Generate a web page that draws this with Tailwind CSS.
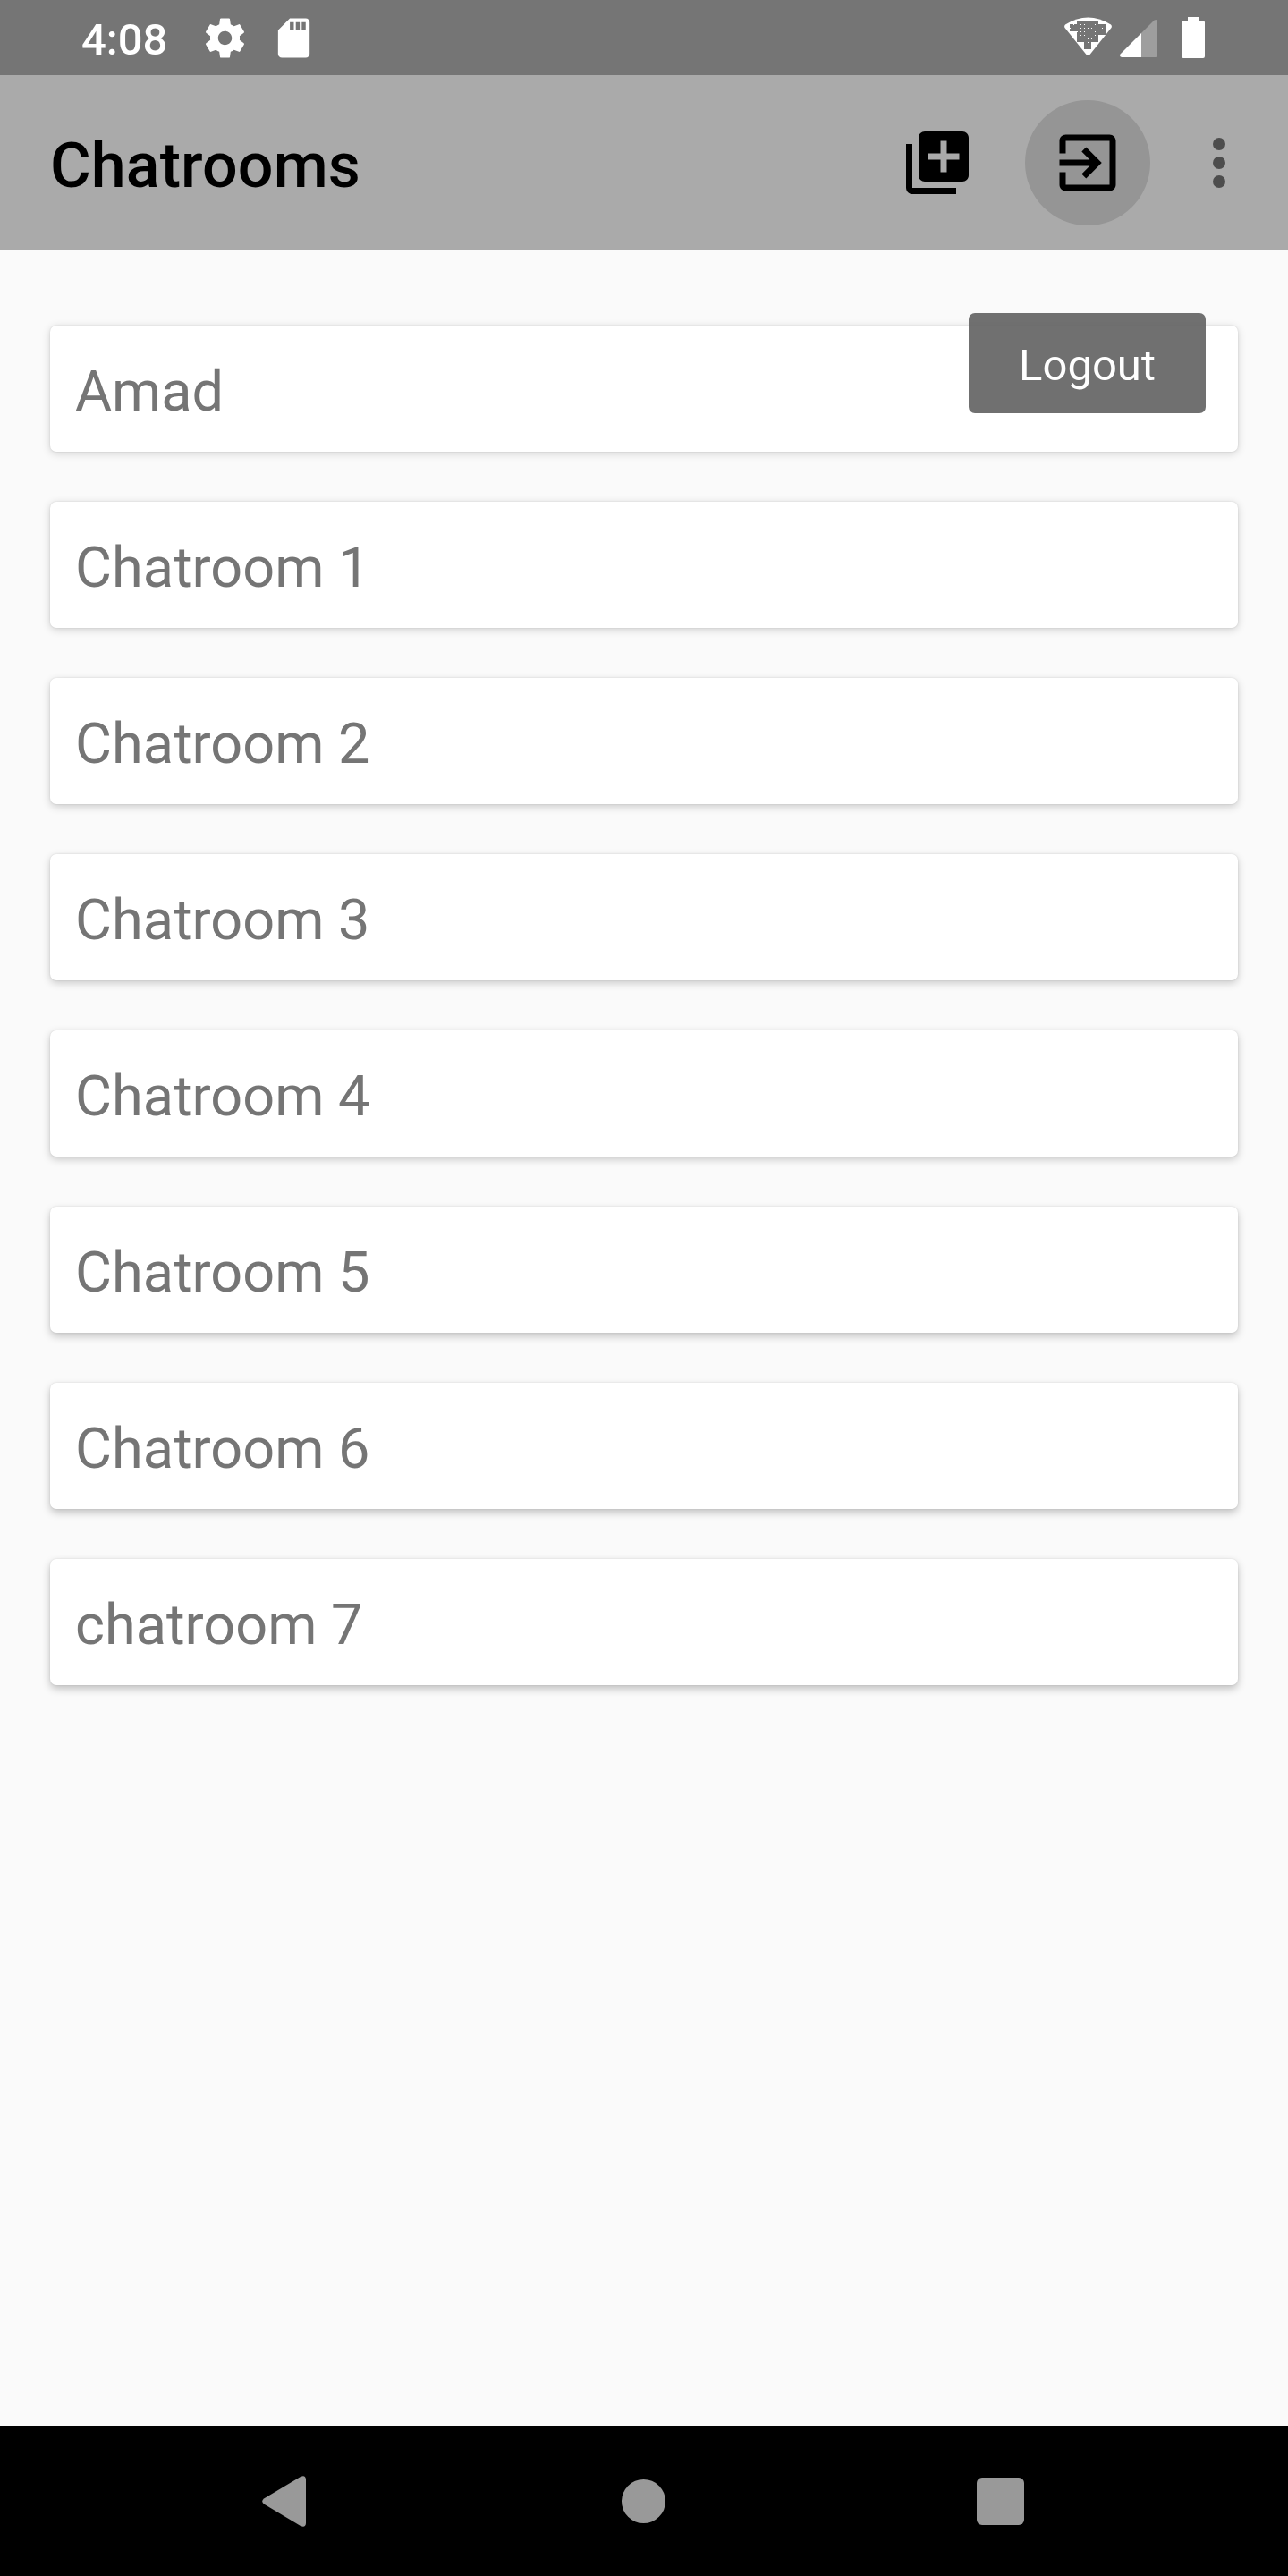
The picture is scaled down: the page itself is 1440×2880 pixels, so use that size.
<!DOCTYPE html>
<html lang="en">
<head>
<meta charset="utf-8">
<title>Chatrooms</title>
<script src="https://cdn.jsdelivr.net/npm/@tailwindcss/browser@4"></script>
</head>
<body class="bg-[#fafafa]">
<div class="relative flex h-[2880px] w-[1440px] flex-col overflow-hidden bg-[#fafafa] font-[Roboto,sans-serif]">

  <!-- Status bar -->
  <header class="flex h-[84px] shrink-0 items-center justify-between bg-[#757575] pr-[93px] pl-[91px] text-white">
    <div class="flex items-center">
      <span class="w-[134px] pt-[5px] text-[49px] leading-none font-medium">4:08</span>
      <svg class="size-[53px]" viewBox="0 0 24 24" fill="currentColor"><path d="M19.43 12.98c.04-.32.07-.64.07-.98s-.03-.66-.07-.98l2.11-1.65c.19-.15.24-.42.12-.64l-2-3.46c-.12-.22-.39-.3-.61-.22l-2.49 1c-.52-.4-1.08-.73-1.69-.98l-.38-2.65C14.46 2.18 14.25 2 14 2h-4c-.25 0-.46.18-.49.42l-.38 2.65c-.61.25-1.17.59-1.69.98l-2.49-1c-.23-.09-.49 0-.61.22l-2 3.46c-.13.22-.07.49.12.64l2.11 1.65c-.04.32-.07.65-.07.98s.03.66.07.98l-2.11 1.65c-.19.15-.24.42-.12.64l2 3.46c.12.22.39.3.61.22l2.49-1c.52.4 1.08.73 1.69.98l.38 2.65c.03.24.24.42.49.42h4c.25 0 .46-.18.49-.42l.38-2.65c.61-.25 1.17-.59 1.69-.98l2.49 1c.23.09.49 0 .61-.22l2-3.46c.12-.22.07-.49-.12-.64l-2.11-1.65zM12 15.5c-1.93 0-3.5-1.57-3.5-3.5s1.57-3.5 3.5-3.5 3.5 1.57 3.5 3.5-1.57 3.5-3.5 3.5z"/></svg>
      <svg class="ml-6 size-[53px]" viewBox="0 0 24 24" fill="currentColor"><path d="M18 2h-8L4.02 8 4 20c0 1.1.9 2 2 2h12c1.1 0 2-.9 2-2V4c0-1.1-.9-2-2-2zm-6 6h-2V4h2v4zm3 0h-2V4h2v4zm3 0h-2V4h2v4z"/></svg>
    </div>
    <svg class="h-[84px] w-[157px]" viewBox="1190 0 157 84" fill="currentColor">
      <path d="M1191 27.5Q1216.500 11.500 1242 27.500Q1243.500 29 1242.500 31L1218.500 61Q1216.500 63 1214.500 61L1190.500 31Q1189.500 29 1191 27.500Z"/>
      <path fill="#757575" d="M1204 23H1228V27H1236V39H1228V47H1220V55H1212V47H1204V35H1196V27H1204Z"/>
      <path d="M1216 23h1v1h-1zM1220 23h1v1h-1zM1208 27h1v1h-1zM1212 27h1v1h-1zM1224 27h1v1h-1zM1196 31h1v1h-1zM1200 27h1v1h-1zM1208 31h1v1h-1zM1212 31h1v1h-1zM1232 31h1v1h-1zM1204 35h1v1h-1zM1216 31h1v1h-1zM1220 31h1v1h-1zM1208 35h1v1h-1zM1212 35h1v1h-1zM1224 35h1v1h-1zM1224 39h1v1h-1zM1208 39h1v1h-1zM1212 39h1v1h-1zM1216 43h1v1h-1zM1220 43h1v1h-1zM1216 47h1v1h-1z"/>
      <path fill="#9e9e9e" d="M1276 37L1290.500 22.500Q1294 21 1294 24V62Q1294 64 1292 64H1276Z"/>
      <path d="M1276 37V64H1254Q1251 63 1252.500 60.500Z"/>
      <path d="M1328 19H1340V23H1345Q1347 23 1347 25V63Q1347 65 1345 65H1323Q1321 65 1321 63V25Q1321 23 1323 23H1328Z"/>
    </svg>
  </header>

  <!-- App bar -->
  <nav class="flex h-[196px] shrink-0 items-center bg-[#aaaaaa] pl-14 text-black">
    <h1 class="grow pt-[5px] text-[70px] leading-none font-medium tracking-[0.1px]">Chatrooms</h1>
    <button class="flex w-[168px] justify-center">
      <svg class="size-[84px]" viewBox="0 0 24 24"><path d="M4 6H2v14c0 1.1.9 2 2 2h14v-2H4V6zm16-4H8c-1.100 0-2 .9-2 2v12c0 1.100.9 2 2 2h12c1.100 0 2-.9 2-2V4c0-1.100-.9-2-2-2zm-1 9h-4v4h-2v-4H9V9h4V5h2v4h4v2z"/></svg>
    </button>
    <button class="mx-3.5 flex size-[140px] items-center justify-center rounded-full bg-[#959595]">
      <svg class="size-[84px]" viewBox="0 0 24 24"><path d="M10.090 15.590L11.500 17l5-5-5-5-1.410 1.410L12.670 11H3v2h9.670l-2.580 2.590zM19 3H5c-1.110 0-2 .9-2 2v4h2V5h14v14H5v-4H3v4c0 1.100.89 2 2 2h14c1.100 0 2-.9 2-2V5c0-1.100-.9-2-2-2z"/></svg>
    </button>
    <button class="flex w-[140px] pl-[21px] text-[#4d4d4d]">
      <svg class="size-[84px]" viewBox="0 0 24 24" fill="currentColor"><circle cx="12" cy="6" r="2"/><circle cx="12" cy="12" r="2"/><circle cx="12" cy="18" r="2"/></svg>
    </button>
  </nav>

  <!-- Chatroom list -->
  <main class="flex grow flex-col gap-14 px-14 pt-[84px] text-[63px] leading-none text-[#757575]">
    <div class="flex h-[141px] items-center rounded-[7px] bg-white px-7 pt-1.5 shadow-[0_0_2px_rgba(0,0,0,0.12),0_2px_10px_rgba(0,0,0,0.17)]">Amad</div>
    <div class="flex h-[141px] items-center rounded-[7px] bg-white px-7 pt-1.5 shadow-[0_0_2px_rgba(0,0,0,0.12),0_2px_10px_rgba(0,0,0,0.18)]">Chatroom 1</div>
    <div class="flex h-[141px] items-center rounded-[7px] bg-white px-7 pt-1.5 shadow-[0_0_2px_rgba(0,0,0,0.12),0_3px_10px_rgba(0,0,0,0.19)]">Chatroom 2</div>
    <div class="flex h-[141px] items-center rounded-[7px] bg-white px-7 pt-1.5 shadow-[0_0_2px_rgba(0,0,0,0.12),0_3px_10px_rgba(0,0,0,0.20)]">Chatroom 3</div>
    <div class="flex h-[141px] items-center rounded-[7px] bg-white px-7 pt-1.5 shadow-[0_0_2px_rgba(0,0,0,0.12),0_3px_10px_rgba(0,0,0,0.21)]">Chatroom 4</div>
    <div class="flex h-[141px] items-center rounded-[7px] bg-white px-7 pt-1.5 shadow-[0_0_2px_rgba(0,0,0,0.11),0_4px_10px_rgba(0,0,0,0.22)]">Chatroom 5</div>
    <div class="flex h-[141px] items-center rounded-[7px] bg-white px-7 pt-1.5 shadow-[0_0_2px_rgba(0,0,0,0.11),0_4px_10px_rgba(0,0,0,0.23)]">Chatroom 6</div>
    <div class="flex h-[141px] items-center rounded-[7px] bg-white px-7 pt-1.5 shadow-[0_0_2px_rgba(0,0,0,0.11),0_4px_10px_rgba(0,0,0,0.24)]">chatroom 7</div>
  </main>

  <!-- Navigation bar -->
  <footer class="flex h-[168px] shrink-0 items-center bg-black text-[#999999]">
    <svg class="ml-[293px] h-[57px] w-[49px]" viewBox="0 0 49 57" fill="currentColor"><path d="M43 1Q48.500-1.500 49 4V53Q48.500 58.500 43 56L2 31.500Q-1.500 28.500 2 25.500Z"/></svg>
    <div class="ml-[353px] size-[49px] rounded-full bg-[#999999]"></div>
    <div class="ml-[348px] size-[53px] rounded-[6px] bg-[#999999]"></div>
  </footer>

  <!-- Tooltip over the list -->
  <div role="tooltip" class="absolute top-[350px] left-[1083px] flex h-28 w-[265px] items-center justify-center rounded-[7px] bg-[#616161]/90 pt-[5px] text-[49px] leading-none text-white">Logout</div>
</div>
</body>
</html>
